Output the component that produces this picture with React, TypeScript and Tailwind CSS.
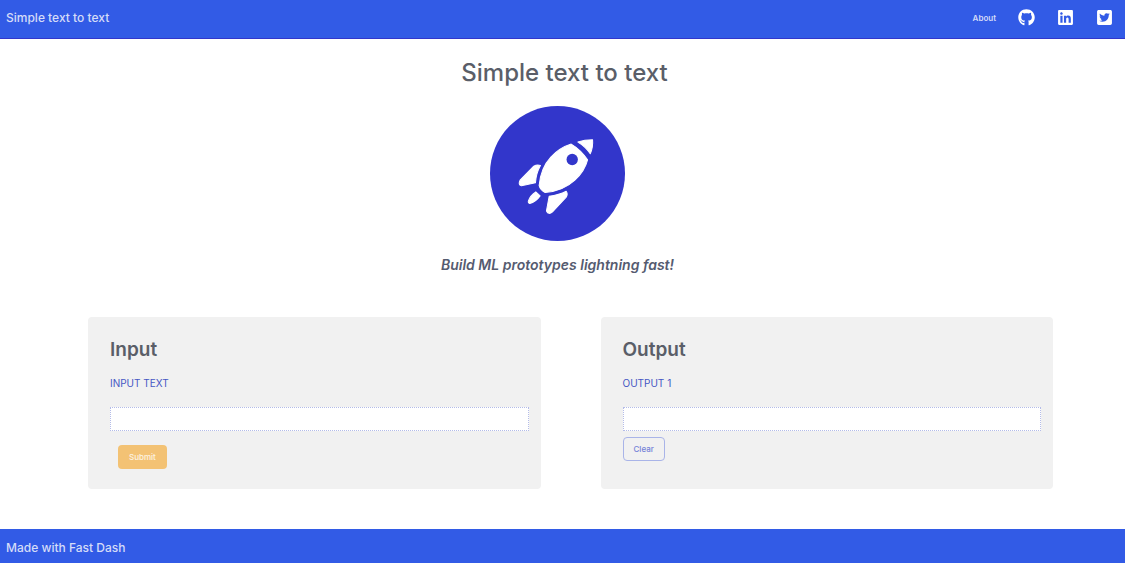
import { useState } from "react";
import { FaGithub, FaLinkedin, FaTwitterSquare } from "react-icons/fa";

const links = [
  { label: "GitHub", Icon: FaGithub },
  { label: "LinkedIn", Icon: FaLinkedin },
  { label: "Twitter", Icon: FaTwitterSquare },
];

function Rocket() {
  return (
    <svg viewBox="32 20 404 404" className="size-[135px]" role="img" aria-label="Rocket">
      <circle cx="234" cy="222" r="202" fill="#3236cb" />
      <g fill="#fff" stroke="#fff" strokeWidth="3" strokeLinejoin="round">
        <path d="M275 134 Q304 151 324 181 Q316 214 286 242 Q250 275 197 279 Q182 270 179 258 Q184 205 214 173 Q240 145 275 134Z" />
        <path d="M295 128 Q315 121 339 121 Q341 143 332 163 Q317 141 295 128Z" />
        <path d="M183 198 Q173 194 163 200 L122 242 Q115 255 126 259 L168 250 Q170 221 183 198Z" />
        <path d="M209 290 Q239 286 260 275 Q266 283 260 293 L219 337 Q207 347 201 334Z" />
        <path d="M169 277 L182 289 Q168 308 151 312 Q145 310 147 304 Q152 288 169 277Z" />
      </g>
      <circle cx="278" cy="180" r="17" fill="#3236cb" />
    </svg>
  );
}

const panel = "flex flex-1 flex-col items-start rounded-sm bg-[#f1f1f1] pt-5 pr-3 pb-5 pl-[22px]";
const heading = "text-[19px] leading-[26px] font-semibold text-[#5a5e68]";
const fieldLabel = "mt-3 text-[10px] leading-4 font-normal text-[#4657c4]";
const field =
  "mt-4 h-6 w-full border border-dotted border-[#b4bce8] bg-white px-2 text-[10px] text-[#5a5e68] outline-none";

export default function App() {
  const [text, setText] = useState("");
  const [output, setOutput] = useState("");

  return (
    <div className="flex min-h-screen flex-col bg-white font-['Inter',sans-serif]">
      <header className="flex h-[39px] items-center justify-between border-b border-[#3236cb] bg-[#325be6] pr-3 pb-[3px] pl-[6px] text-[#d5dcf8]">
        <span className="text-xs font-medium">Simple text to text</span>
        <nav className="flex items-center gap-[22px]">
          <a href="#about" className="text-[8px] leading-3 font-semibold">
            About
          </a>
          {links.map(({ label, Icon }) => (
            <a key={label} href={"#" + label.toLowerCase()} aria-label={label} className="text-white">
              <Icon className="size-[17px]" />
            </a>
          ))}
        </nav>
      </header>

      <main className="flex-1 pb-10">
        <h1 className="mt-[17px] pl-1 text-center text-2xl leading-[34px] font-medium text-[#5a5e68]">
          Simple text to text
        </h1>
        <div className="mt-4 flex flex-col items-center pr-[10px]">
          <Rocket />
          <p className="mt-3 text-sm leading-6 font-semibold text-[#555b70] italic">
            Build ML prototypes lightning fast!
          </p>
        </div>

        <div className="mt-10 flex gap-[60px] pr-[72px] pl-[88px]">
          <section className={panel}>
            <h2 className={heading}>Input</h2>
            <label htmlFor="input-text" className={fieldLabel}>
              INPUT TEXT
            </label>
            <input id="input-text" className={field} value={text} onChange={(e) => setText(e.target.value)} />
            <button
              type="button"
              onClick={() => setOutput(text)}
              className="mt-[14px] ml-2 h-6 rounded-sm bg-[#f3c274] px-[11px] text-[8px] font-medium text-[#fdf3e2]"
            >
              Submit
            </button>
          </section>
          <section className={panel}>
            <h2 className={heading}>Output</h2>
            <label htmlFor="output-1" className={fieldLabel}>
              OUTPUT 1
            </label>
            <input id="output-1" className={field} value={output} readOnly />
            <button
              type="button"
              onClick={() => setOutput("")}
              className="mt-[6px] h-6 rounded-sm border border-[#a9b4e8] px-[10px] text-[8px] font-medium text-[#7482d8]"
            >
              Clear
            </button>
          </section>
        </div>
      </main>

      <footer className="flex h-[34px] items-center bg-[#325be6] pt-1 pl-[6px] text-xs font-medium text-[#d5dcf8]">
        Made with Fast Dash
      </footer>
    </div>
  );
}
